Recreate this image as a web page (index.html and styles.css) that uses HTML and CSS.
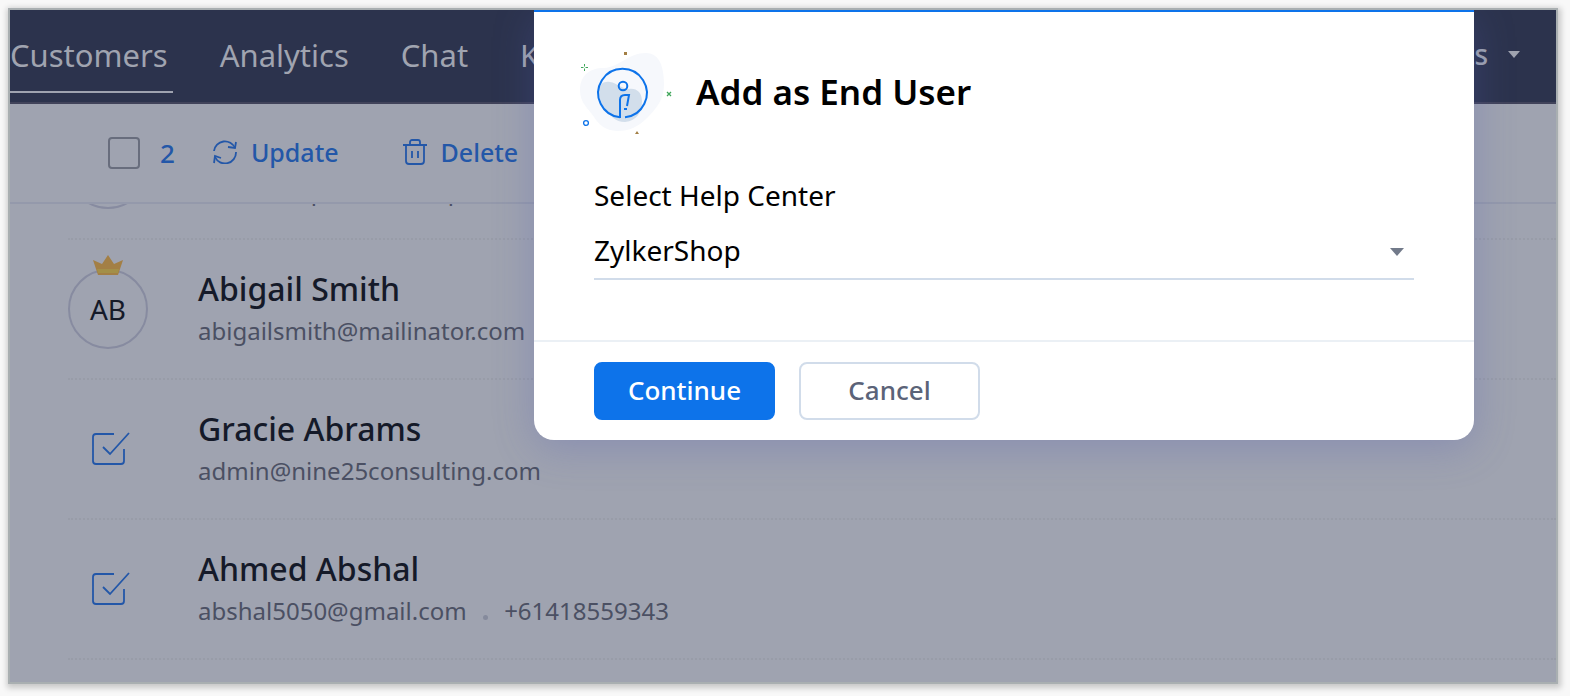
FILE: index.html
```html
<!DOCTYPE html>
<html lang="en">
<head>
    <meta charset="UTF-8">
    <meta name="viewport" content="width=device-width, initial-scale=1.0">
    <title>Customers - Add as End User</title>
    <link rel="stylesheet" href="styles.css">
</head>
<body>
    <!-- Shared icon -->
    <svg class="sprite" aria-hidden="true">
        <symbol id="tick" viewBox="0 0 40 34">
            <path d="M24 2H6a3 3 0 0 0-3 3v24a3 3 0 0 0 3 3h25a3 3 0 0 0 3-3V17M13 15l7 7L39 1" fill="none" stroke="currentColor" stroke-width="1.8"/>
        </symbol>
    </svg>

    <div class="frame">
        <header class="topbar">
            <nav class="nav">
                <a class="nav-link active" href="#customers">Customers</a>
                <a class="nav-link" href="#analytics">Analytics</a>
                <a class="nav-link" href="#chat">Chat</a>
                <a class="nav-link" href="#kb">KB</a>
            </nav>
            <button class="department" type="button">Departments <span class="caret"></span></button>
        </header>

        <div class="toolbar">
            <input class="select-all" type="checkbox" id="selectAll">
            <label class="count" for="selectAll">2</label>
            <button class="action update" type="button">
                <svg width="24" height="24" viewBox="0 0 24 24" fill="none" stroke="currentColor" stroke-width="1.8">
                    <path d="M1 11A11 11 0 0 1 22 8M23 12A11 11 0 0 1 2 17"/>
                    <path d="M23 2l-1 6-7-1M1 23l1-7 6 2"/>
                </svg>
                Update
            </button>
            <button class="action" type="button">
                <svg width="24" height="26" viewBox="0 0 24 26" fill="none" stroke="currentColor" stroke-width="1.8">
                    <path d="M0 6h24M3 6v16a3 3 0 0 0 3 3h12a3 3 0 0 0 3-3V6M7 6V3a2 2 0 0 1 2-2h6a2 2 0 0 1 2 2v3M9 12v7M15 12v7"/>
                </svg>
                Delete
            </button>
        </div>

        <main class="list">
            <ul class="customers">
                <li class="customer">
                    <span class="avatar">SP</span>
                    <div>
                        <h2>Samantha Park</h2>
                        <p>samanthap@relatecorp.com</p>
                    </div>
                </li>
                <li class="customer">
                    <span class="avatar">
                        AB
                        <svg class="crown" width="30" height="20" viewBox="0 0 30 20">
                            <path fill="#a37f45" d="M0 5l9 4 6-9 6 9 9-4-5 15H5z"/>
                            <path fill="#a38f48" d="M4 14h22l-1 4H5z"/>
                        </svg>
                    </span>
                    <div>
                        <h2>Abigail Smith</h2>
                        <p>abigailsmith@mailinator.com</p>
                    </div>
                </li>
                <li class="customer">
                    <label class="pick">
                        <input type="checkbox" aria-label="Select Gracie Abrams" checked>
                        <svg width="40" height="34"><use href="#tick"/></svg>
                    </label>
                    <div>
                        <h2>Gracie Abrams</h2>
                        <p>admin@nine25consulting.com</p>
                    </div>
                </li>
                <li class="customer">
                    <label class="pick">
                        <input type="checkbox" aria-label="Select Ahmed Abshal" checked>
                        <svg width="40" height="34"><use href="#tick"/></svg>
                    </label>
                    <div>
                        <h2>Ahmed Abshal</h2>
                        <p>abshal5050@gmail.com <span class="dot"></span> +61418559343</p>
                    </div>
                </li>
            </ul>
        </main>

        <form class="modal" role="dialog" aria-labelledby="modalTitle">
            <div class="modal-header">
                <svg width="92" height="84" viewBox="0 0 92 84" fill="none">
                    <path fill="#f6f8fc" d="M0 40C0 26 9 18 24 18C40 17 48 3 66 3C78 3 84 14 84 34C84 48 78 57 68 67C58 77 50 81 37 81C25 80 20 76 14 67C8 58 0 53 0 40Z"/>
                    <path fill="#d2deeb" d="M19 42C19 34 24 31 30 32C37 33 42 39 49 39C57 38 62 43 62 51C62 62 57 71 45 72C35 72 31 66 26 60C22 54 19 49 19 42Z"/>
                    <g stroke="#0d73ea" stroke-width="2">
                        <path d="M40 67.3A24.3 24.3 0 1 1 45 67.3M40 68V50C40 46 42 45 45 45H49L47 56"/>
                        <circle cx="43" cy="36" r="4.3"/>
                        <circle cx="6" cy="73" r="2.4" stroke-width="1.3"/>
                    </g>
                    <path fill="#0d73ea" d="M44 58h3v2h-3z"/>
                    <path stroke="#3fa65a" d="M4.500 14v2.500M4.500 18.500v2.500M1 17.500h2.500M5.500 17.500h2.500"/>
                    <path stroke="#3fa65a" stroke-width="1.3" d="M87 42l4 4M91 42l-4 4"/>
                    <path fill="#a37f45" d="M44 2h3v3h-3zM55 84l2-3 2 3z"/>
                </svg>
                <h1 id="modalTitle">Add as End User</h1>
            </div>
            <div class="modal-body">
                <label for="helpCenter">Select Help Center</label>
                <div class="select-box">
                    <select id="helpCenter">
                        <option>ZylkerShop</option>
                    </select>
                </div>
            </div>
            <div class="modal-footer">
                <button class="btn primary" type="button">Continue</button>
                <button class="btn" type="button">Cancel</button>
            </div>
        </form>
    </div>
</body>
</html>
```
FILE: styles.css
```css
* {
    box-sizing: border-box;
}

body {
    display: flex;
    height: 100vh;
    margin: 0;
    padding: 8px 12px 12px 8px;
    background-color: #f8f8f8;
    color: #151a29;
    font-family: "Noto Sans", sans-serif;
}

h1, h2, p, ul {
    margin: 0;
    padding: 0;
}

button, select {
    font-family: inherit;
    cursor: pointer;
}

.sprite {
    position: absolute;
    width: 0;
    height: 0;
}

.frame {
    position: relative;
    display: flex;
    flex: 1;
    flex-direction: column;
    overflow: hidden;
    border: 2px solid #a9afb1;
    background-color: #9fa3b0;
    box-shadow: 1px 2px 6px 2px rgba(0, 0, 0, 0.2);
}

/* Top bar */
.topbar {
    display: flex;
    justify-content: space-between;
    height: 94px;
    padding-right: 36px;
    border-bottom: 2px solid #41435a;
    background-color: #2c334d;
}

.nav {
    display: flex;
    align-items: flex-start;
    gap: 47px;
}

.nav-link {
    padding: 9px 5px 0 0;
    border-bottom: 2px solid transparent;
    color: #a0a4b0;
    font-size: 31px;
    font-weight: 400;
    line-height: 72px;
    text-decoration: none;
}

.nav-link.active {
    border-color: #9fa3b0;
}

.department {
    display: flex;
    align-items: center;
    gap: 20px;
    padding: 0 0 4px;
    border: none;
    background: none;
    color: #a0a4b0;
    font-size: 28px;
    font-weight: 500;
}

.caret {
    border: 6px solid transparent;
    border-top: 7px solid #a0a4b0;
    border-bottom: none;
}

/* Bulk actions */
.toolbar {
    display: flex;
    align-items: center;
    height: 100px;
    padding: 0 98px;
    border-bottom: 2px solid #9499ab;
    color: #2357a8;
    font-size: 26px;
}

.select-all {
    width: 32px;
    height: 32px;
    margin: 0 20px 0 0;
    appearance: none;
    border: 2px solid #686d7d;
    border-radius: 4px;
}

.count {
    margin-right: 38px;
    font-weight: 500;
}

.action {
    display: flex;
    align-items: center;
    gap: 14px;
    padding: 0 0 2px;
    border: none;
    background: none;
    color: inherit;
    font-size: 25px;
    font-weight: 500;
}

.update {
    margin-right: 64px;
}

/* Customer list, scrolled part of the way down */
.list {
    flex: 1;
    overflow: hidden;
    padding-left: 58px;
}

.customers {
    margin-top: -104px;
    list-style: none;
}

.customer {
    display: flex;
    align-items: center;
    gap: 50px;
    height: 140px;
    border-bottom: 2px dotted #989ca8;
}

.avatar {
    position: relative;
    display: flex;
    align-items: center;
    justify-content: center;
    width: 80px;
    height: 80px;
    border: 2px solid #878ba0;
    border-radius: 50%;
    font-size: 28px;
}

.crown {
    position: absolute;
    top: -16px;
    left: 23px;
}

.pick {
    position: relative;
    display: flex;
    width: 80px;
    padding-left: 22px;
    color: #2357a8;
}

.pick input {
    position: absolute;
    opacity: 0;
}

.customer h2 {
    font-size: 32px;
    font-weight: 500;
    line-height: 44px;
}

.customer p {
    color: #4b5063;
    font-size: 24px;
    line-height: 40px;
}

.dot {
    display: inline-block;
    width: 5px;
    height: 5px;
    margin: 0 10px;
    border-radius: 50%;
    background-color: #858a9c;
}

/* Dialog */
.modal {
    position: absolute;
    top: 0;
    left: 524px;
    right: 82px;
    border-top: 2px solid #0d73ea;
    border-radius: 0 0 20px 20px;
    background-color: #fff;
    color: #000;
    box-shadow: 0 8px 40px rgba(82, 94, 180, 0.3);
}

.modal-header {
    display: flex;
    align-items: center;
    gap: 24px;
    padding: 38px 60px 0 46px;
}

.modal-header h1 {
    font-size: 35px;
    font-weight: 600;
    line-height: 48px;
}

.modal-body {
    padding: 42px 60px 60px;
    font-size: 28px;
}

.modal-body label {
    display: block;
    margin-bottom: 8px;
    line-height: 38px;
}

.select-box {
    position: relative;
}

.select-box::after {
    content: "";
    position: absolute;
    top: 26px;
    right: 10px;
    border: 7px solid transparent;
    border-top: 8px solid #727a8a;
    border-bottom: none;
    pointer-events: none;
}

.select-box select {
    display: block;
    width: 100%;
    height: 58px;
    padding: 0;
    appearance: none;
    border: none;
    border-bottom: 2px solid #d1dcea;
    border-radius: 0;
    background: none;
    color: #000;
    font-size: 28px;
}

.modal-footer {
    display: flex;
    gap: 24px;
    padding: 20px 60px;
    border-top: 2px solid #ebf0f5;
}

.btn {
    width: 181px;
    height: 58px;
    padding: 0 0 2px;
    border: 2px solid #d1dcea;
    border-radius: 8px;
    background-color: #fff;
    color: #5b6378;
    font-size: 26px;
    font-weight: 500;
}

.btn.primary {
    border-color: #0d73ea;
    background-color: #0d73ea;
    color: #fff;
}
```
